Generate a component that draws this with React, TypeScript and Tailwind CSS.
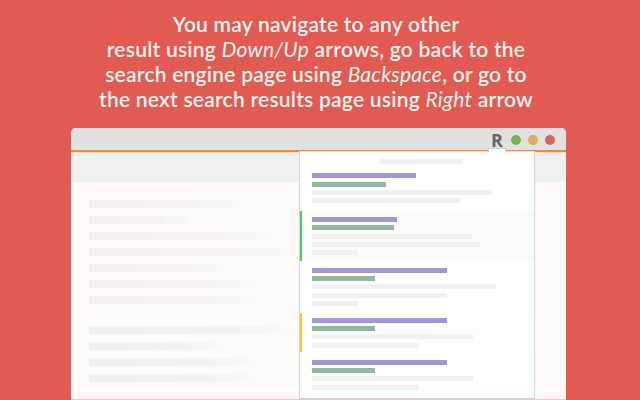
const fadeBars = [
    { width: 'w-[154px]', gap: 'mt-0' },
    { width: 'w-[104px]', gap: 'mt-2' },
    { width: 'w-[188px]', gap: 'mt-2' },
    { width: 'w-[208px]', gap: 'mt-2' },
    { width: 'w-[138px]', gap: 'mt-2' },
    { width: 'w-[171px]', gap: 'mt-2' },
    { width: 'w-[171px]', gap: 'mt-2' },
    { width: 'w-[208px]', gap: 'mt-[22px]' },
    { width: 'w-[138px]', gap: 'mt-2' },
    { width: 'w-[171px]', gap: 'mt-2' },
    { width: 'w-[171px]', gap: 'mt-2' },
];

interface ResultProps {
    title: string;
    link: string;
    lines: string[];
    className: string;
}

const Result = ({ title, link, lines, className }: ResultProps) => (
    <div className={`flex flex-col gap-[3.35px] pl-[12px] ${className}`}>
        <div className={`h-[5px] bg-[#9d97dc] ${title}`} />
        <div className={`h-[5px] bg-[#90b99b] ${link}`} />
        {lines.map((line, i) => (
            <div key={i} className={`h-[5px] bg-[#f1f1f1] ${line}`} />
        ))}
    </div>
);

const App = () => {
    return (
        <div className="flex h-[400px] w-[640px] flex-col overflow-hidden bg-[#e15b52] font-['Lato',sans-serif]">
            <div className="h-[128px] pr-[8px] pt-[11px] text-center text-[21px] font-semibold leading-[25px] tracking-[0.24px] text-[#fff3f1]">
                <p>You may navigate to any other</p>
                <p>
                    result using <em className="font-normal">Down/Up</em> arrows, go back to the
                </p>
                <p>
                    search engine page using <em className="font-normal">Backspace</em>, or go to
                </p>
                <p>
                    the next search results page using <em className="font-normal">Right</em> arrow
                </p>
            </div>

            <div className="relative ml-[71px] flex h-[272px] w-[495px] flex-col rounded-t-[5px] border-b border-[#f6c3bf] bg-[#fff9f8]">
                <div className="flex h-[22px] items-center justify-end rounded-t-[5px] bg-[#e1e1e1] pr-[11px] pt-[2px]">
                    <span className="mr-[8px] font-['Open_Sans',sans-serif] text-[18px] font-bold leading-none text-[#666666]">
                        R
                    </span>
                    <span className="h-[10px] w-[10px] rounded-full bg-[#74b751]" />
                    <span className="ml-[7px] h-[10px] w-[10px] rounded-full bg-[#e3ab5d]" />
                    <span className="ml-[7px] h-[10px] w-[10px] rounded-full bg-[#dd635f]" />
                </div>
                <div className="h-[3px] border-b border-[#f5d8c2] bg-[#ef8a35]" />
                <div className="h-[29px] bg-[#f0f0f0]" />
                <div className="flex flex-col pl-[18px] pt-[18px]">
                    {fadeBars.map((bar, i) => (
                        <div
                            key={i}
                            className={`h-[8px] bg-gradient-to-r from-[#f0f0f0] via-[#f4f3f3] via-70% to-[#fff9f8] ${bar.width} ${bar.gap}`}
                        />
                    ))}
                </div>

                {/* results popup */}
                <div className="absolute left-[228px] top-[23px] flex h-[248px] w-[236px] flex-col border border-[#d4d4d4] border-t-[#ecdcd0] bg-white">
                    <div className="absolute -top-[4px] left-[188px] h-[4px] w-[18px] border-x border-t border-[#d4d4d4] bg-white" />
                    <div className="ml-[80px] mt-[7px] h-[5px] w-[83px] bg-[#f1f1f1]" />
                    <Result
                        className="mt-[9.3px]"
                        title="w-[104px]"
                        link="w-[74px]"
                        lines={['w-[181px]', 'w-[148px]']}
                    />
                    <div className="mt-[7.65px] h-[50px] border-l-[2px] border-[#4ecb66] bg-[#fbfbfb] pt-[6px]">
                        <Result
                            className="!pl-[10px]"
                            title="w-[85px]"
                            link="w-[82px]"
                            lines={['w-[160px]', 'w-[168px]', 'w-[46px]']}
                        />
                    </div>
                    <Result
                        className="mt-[6.8px]"
                        title="w-[135px]"
                        link="w-[63px]"
                        lines={['w-[184px]', 'w-[135px]', 'w-[46px]']}
                    />
                    <div className="mt-[6.8px] h-[39.3px] border-l-[2px] border-[#f5c92c] bg-[#fdfdfd] pt-[4.8px]">
                        <Result
                            className="!pl-[10px]"
                            title="w-[135px]"
                            link="w-[63px]"
                            lines={['w-[161px]', 'w-[107px]']}
                        />
                    </div>
                    <Result
                        className="mt-[7.5px]"
                        title="w-[135px]"
                        link="w-[63px]"
                        lines={['w-[161px]', 'w-[107px]']}
                    />
                </div>
            </div>
        </div>
    );
};

export default App;
